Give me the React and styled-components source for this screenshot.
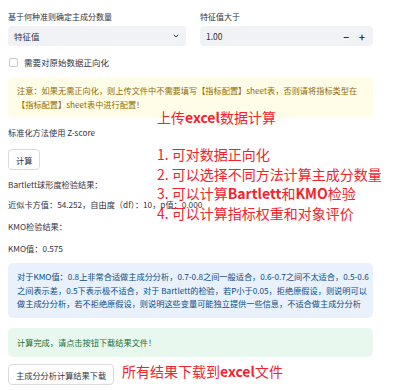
import React from "react";
import styled, { createGlobalStyle } from "styled-components";

const Global = createGlobalStyle`
  html, body { margin: 0; padding: 0; background: #ffffff; }
  body {
    font-family: "Noto Sans CJK SC", "Noto Sans", sans-serif;
    color: #31333f;
  }
`;

const Page = styled.div`
  position: relative;
  width: 400px;
  height: 390px;
  overflow: hidden;
  box-sizing: border-box;
  padding: 11px 27px 0 8px;
  display: flex;
  flex-direction: column;
`;

const Columns = styled.div`
  display: grid;
  grid-template-columns: 178px 173px;
  column-gap: 14px;
`;

const Field = styled.div`
  display: flex;
  flex-direction: column;
  gap: 3px;
`;

const Label = styled.div`
  font-size: 8px;
  line-height: 12px;
`;

const InputBox = styled.div`
  height: 20px;
  border-radius: 4px;
  background: #f0f2f6;
  display: flex;
  align-items: center;
  padding: 0 6px;
  font-size: 8.5px;
  justify-content: space-between;
`;

const Steppers = styled.div`
  display: flex;
  gap: 10px;
  font-size: 10px;
  font-weight: 600;
  padding-right: 2px;
`;

const CheckRow = styled.label`
  display: flex;
  align-items: center;
  gap: 6px;
  font-size: 8.5px;
  margin-top: 11px;
  height: 10px;
`;

const Box = styled.span`
  width: 7px;
  height: 7px;
  border: 1px solid #c4c6cc;
  border-radius: 2px;
  margin-left: 1px;
`;

const Alert = styled.div`
  margin-top: ${(p) => p.$mt || 0}px;
  background: ${(p) => p.$bg};
  color: ${(p) => p.$fg};
  border-radius: 5px;
  padding: ${(p) => p.$pad || "8px 9px"};
  font-size: 8.2px;
  line-height: 13.5px;
  white-space: nowrap;
`;

const Text = styled.div`
  font-size: ${(p) => p.$size || 8.2}px;
  line-height: 12px;
  margin-top: ${(p) => p.$mt || 0}px;
  white-space: nowrap;
`;

const Button = styled.div`
  align-self: flex-start;
  margin-top: ${(p) => p.$mt || 0}px;
  height: 21px;
  box-sizing: border-box;
  padding: 0 7px;
  border: 1px solid #d9dbe0;
  border-radius: 4px;
  display: flex;
  align-items: center;
  font-size: 8.2px;
  background: #fff;
`;

const Note = styled.div`
  position: absolute;
  left: ${(p) => p.$x}px;
  top: ${(p) => p.$y}px;
  color: #f5222d;
  font-family: "Noto Sans CJK SC", "Noto Sans", sans-serif;
  font-size: 14px;
  line-height: 19.5px;
  white-space: nowrap;
  b { font-weight: 700; }
`;

function Chevron() {
  return (
    <svg width="8" height="8" viewBox="0 0 24 24" fill="none" stroke="#31333f" strokeWidth="3" strokeLinecap="round" strokeLinejoin="round">
      <path d="M6 9l6 6 6-6" />
    </svg>
  );
}

export default function App() {
  return (
    <>
      <Global />
      <Page>
        <Columns>
          <Field>
            <Label>基于何种准则确定主成分数量</Label>
            <InputBox>
              <span>特征值</span>
              <Chevron />
            </InputBox>
          </Field>
          <Field>
            <Label>特征值大于</Label>
            <InputBox>
              <span>1.00</span>
              <Steppers>
                <span>−</span>
                <span>+</span>
              </Steppers>
            </InputBox>
          </Field>
        </Columns>
        <CheckRow>
          <Box />
          需要对原始数据正向化
        </CheckRow>
        <Alert $mt={10} $bg="#fffce7" $fg="#926c05" $pad="7px 9px 7px 9px">
          注意：如果无需正向化，则上传文件中不需要填写【指标配置】sheet表，否则请将指标类型在
          <br />
          【指标配置】sheet表中进行配置！
        </Alert>
        <Text $mt={8}>标准化方法使用 Z-score</Text>
        <Button $mt={11}>计算</Button>
        <Text $mt={8}>Bartlett球形度检验结果：</Text>
        <Text $mt={8}>近似卡方值：54.252，自由度（df）：10，p值：0.000</Text>
        <Text $mt={10}>KMO检验结果：</Text>
        <Text $mt={10}>KMO值：0.575</Text>
        <Alert $mt={9} $bg="#e9f2fc" $fg="#0b4a85" $pad="7px 9px">
          对于KMO值：0.8上非常合适做主成分分析，0.7-0.8之间一般适合，0.6-0.7之间不太适合，0.5-0.6
          <br />
          之间表示差，0.5下表示极不适合，对于 Bartlett的检验，若P小于0.05，拒绝原假设，则说明可以
          <br />
          做主成分分析，若不拒绝原假设，则说明这些变量可能独立提供一些信息，不适合做主成分分析
        </Alert>
        <Alert $mt={10} $bg="#e9f8ee" $fg="#1a6e34" $pad="8px 9px">
          计算完成，请点击按钮下载结果文件！
        </Alert>
        <Button $mt={7}>主成分分析计算结果下载</Button>

        <Note $x={157} $y={108}>
          上传<b>excel</b>数据计算
        </Note>
        <Note $x={157} $y={145}>
          1. 可对数据正向化
          <br />
          2. 可以选择不同方法计算主成分数量
          <br />
          3. 可以计算<b>Bartlett</b>和<b>KMO</b>检验
          <br />
          4. 可以计算指标权重和对象评价
        </Note>
        <Note $x={122} $y={362}>
          所有结果下载到<b>excel</b>文件
        </Note>
      </Page>
    </>
  );
}
